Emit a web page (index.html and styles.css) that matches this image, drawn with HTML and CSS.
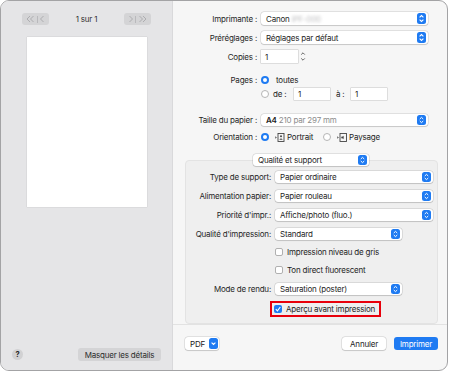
FILE: index.html
```html
<!DOCTYPE html>
<html lang="fr">
<head>
<meta charset="utf-8">
<link rel="stylesheet" href="styles.css">
</head>
<body>
<div class="win">
  <aside class="side">
    <div class="nav">
      <div class="navbtn">
        <svg width="9" height="8" viewBox="0 0 9 8"><path d="M4 1 L1 4 L4 7 M7.5 1 L4.5 4 L7.5 7" fill="none" stroke="#a8a8ab" stroke-width="0.9"/></svg>
        <span class="nsep"></span>
        <svg width="5" height="8" viewBox="0 0 5 8"><path d="M3.5 1 L0.5 4 L3.5 7" fill="none" stroke="#a8a8ab" stroke-width="0.9"/></svg>
      </div>
      <span class="pg">1 sur 1</span>
      <div class="navbtn">
        <svg width="5" height="8" viewBox="0 0 5 8"><path d="M1.5 1 L4.5 4 L1.5 7" fill="none" stroke="#a8a8ab" stroke-width="0.9"/></svg>
        <span class="nsep"></span>
        <svg width="9" height="8" viewBox="0 0 9 8"><path d="M1.5 1 L4.5 4 L1.5 7 M5 1 L8 4 L5 7" fill="none" stroke="#a8a8ab" stroke-width="0.9"/></svg>
      </div>
    </div>
    <div class="page"></div>
    <div class="side-foot">
      <span class="help">?</span>
      <span class="gbtn">Masquer les détails</span>
    </div>
  </aside>
  <main class="main">
    <div class="form">
      <div class="row r1">
        <span class="lbl">Imprimante :</span>
        <div class="pop w-full"><span class="txt">Canon <span class="blur">iPF-000</span></span><span class="arr"><svg width="9" height="11" viewBox="0 0 9 11"><path d="M2.6 4.4 L4.5 2.6 L6.4 4.4 M2.6 6.6 L4.5 8.4 L6.4 6.6" fill="none" stroke="#fff" stroke-width="1.1"/></svg></span></div>
      </div>
      <div class="row r2">
        <span class="lbl">Préréglages :</span>
        <div class="pop w-full"><span class="txt">Réglages par défaut</span><span class="arr"><svg width="9" height="11" viewBox="0 0 9 11"><path d="M2.6 4.4 L4.5 2.6 L6.4 4.4 M2.6 6.6 L4.5 8.4 L6.4 6.6" fill="none" stroke="#fff" stroke-width="1.1"/></svg></span></div>
      </div>
      <div class="row r3">
        <span class="lbl">Copies :</span>
        <span class="field copies">1</span>
        <span class="stepper"><svg width="8" height="13" viewBox="0 0 8 13"><path d="M2.2 4.6 L4 2.8 L5.8 4.6 M2.2 8.4 L4 10.2 L5.8 8.4" fill="none" stroke="#555" stroke-width="0.9"/></svg></span>
      </div>
      <div class="row r4">
        <span class="lbl">Pages :</span>
        <span class="radio on"></span><span class="rtxt">toutes</span>
      </div>
      <div class="row r5">
        <span class="lbl"></span>
        <span class="radio"></span><span class="rtxt de">de :</span>
        <span class="field small">1</span>
        <span class="a">à :</span>
        <span class="field small">1</span>
      </div>
      <div class="row r6">
        <span class="lbl">Taille du papier :</span>
        <div class="pop w-full h12"><span class="txt"><b class="a4">A4</b> <span class="dim">210 par 297 mm</span></span><span class="arr"><svg width="9" height="11" viewBox="0 0 9 11"><path d="M2.6 4.4 L4.5 2.6 L6.4 4.4 M2.6 6.6 L4.5 8.4 L6.4 6.6" fill="none" stroke="#fff" stroke-width="1.1"/></svg></span></div>
      </div>
      <div class="row r7">
        <span class="lbl">Orientation :</span>
        <span class="radio on"></span>
        <svg class="oicon" width="10" height="9" viewBox="0 0 10 9"><path d="M0.3 3.2 L1.8 4.5 L0.3 5.8 Z" fill="#444"/><rect x="3" y="0.5" width="6" height="8" fill="none" stroke="#444" stroke-width="0.9"/><circle cx="6" cy="3.2" r="1" fill="#444"/><path d="M4.3 6.8 Q6 4.4 7.7 6.8 Z" fill="#444"/></svg>
        <span class="otxt">Portrait</span>
        <span class="radio"></span>
        <svg class="oicon" width="10" height="9" viewBox="0 0 10 9"><path d="M0.3 3.2 L1.8 4.5 L0.3 5.8 Z" fill="#444"/><rect x="3" y="0.5" width="6.5" height="8" fill="none" stroke="#444" stroke-width="0.9"/><circle cx="5.2" cy="4.5" r="1" fill="#444"/><path d="M6.6 2.8 Q4.4 4.5 6.6 6.2 Z" fill="#444"/></svg>
        <span class="otxt">Paysage</span>
      </div>
      <div class="group">
        <div class="pop gpop"><span class="txt">Qualité et support</span><span class="arr"><svg width="9" height="11" viewBox="0 0 9 11"><path d="M2.6 4.4 L4.5 2.6 L6.4 4.4 M2.6 6.6 L4.5 8.4 L6.4 6.6" fill="none" stroke="#fff" stroke-width="1.1"/></svg></span></div>
        <div class="grow first">
          <span class="glbl">Type de support:</span>
          <div class="pop h12 wide"><span class="txt">Papier ordinaire</span><span class="arr"><svg width="9" height="11" viewBox="0 0 9 11"><path d="M2.6 4.4 L4.5 2.6 L6.4 4.4 M2.6 6.6 L4.5 8.4 L6.4 6.6" fill="none" stroke="#fff" stroke-width="1.1"/></svg></span></div>
        </div>
        <div class="grow">
          <span class="glbl">Alimentation papier:</span>
          <div class="pop h12 wide"><span class="txt">Papier rouleau</span><span class="arr"><svg width="9" height="11" viewBox="0 0 9 11"><path d="M2.6 4.4 L4.5 2.6 L6.4 4.4 M2.6 6.6 L4.5 8.4 L6.4 6.6" fill="none" stroke="#fff" stroke-width="1.1"/></svg></span></div>
        </div>
        <div class="grow">
          <span class="glbl">Priorité d'impr.:</span>
          <div class="pop h12 wide"><span class="txt">Affiche/photo (fluo.)</span><span class="arr"><svg width="9" height="11" viewBox="0 0 9 11"><path d="M2.6 4.4 L4.5 2.6 L6.4 4.4 M2.6 6.6 L4.5 8.4 L6.4 6.6" fill="none" stroke="#fff" stroke-width="1.1"/></svg></span></div>
        </div>
        <div class="grow">
          <span class="glbl">Qualité d'impression:</span>
          <div class="pop h12 mid"><span class="txt">Standard</span><span class="arr"><svg width="9" height="11" viewBox="0 0 9 11"><path d="M2.6 4.4 L4.5 2.6 L6.4 4.4 M2.6 6.6 L4.5 8.4 L6.4 6.6" fill="none" stroke="#fff" stroke-width="1.1"/></svg></span></div>
        </div>
        <div class="grow cbrow">
          <span class="glbl"></span>
          <span class="cb"></span><span class="cbtxt">Impression niveau de gris</span>
        </div>
        <div class="grow cbrow">
          <span class="glbl"></span>
          <span class="cb"></span><span class="cbtxt">Ton direct fluorescent</span>
        </div>
        <div class="grow">
          <span class="glbl">Mode de rendu:</span>
          <div class="pop h12 mid"><span class="txt">Saturation (poster)</span><span class="arr"><svg width="9" height="11" viewBox="0 0 9 11"><path d="M2.6 4.4 L4.5 2.6 L6.4 4.4 M2.6 6.6 L4.5 8.4 L6.4 6.6" fill="none" stroke="#fff" stroke-width="1.1"/></svg></span></div>
        </div>
        <div class="redbox">
          <span class="cb on"><svg width="8" height="8" viewBox="0 0 8 8"><path d="M1.8 4.2 L3.4 5.8 L6.3 2" fill="none" stroke="#fff" stroke-width="1.1"/></svg></span><span class="cbtxt">Aperçu avant impression</span>
        </div>
      </div>
    </div>
    <div class="foot">
      <span class="pdf">PDF<span class="arr"><svg width="9" height="11" viewBox="0 0 9 11"><path d="M2.6 4.6 L4.5 6.5 L6.4 4.6" fill="none" stroke="#fff" stroke-width="1.1"/></svg></span></span>
      <span class="spacer"></span>
      <span class="wbtn">Annuler</span>
      <span class="bbtn">Imprimer</span>
    </div>
  </main>
</div>
</body>
</html>
```

FILE: styles.css
```css
body {
  margin: 0;
  background: #ffffff;
  font-family: Inter, "Liberation Sans", sans-serif;
  font-size: 8px;
  letter-spacing: -0.2px;
  color: #242424;
}

.win {
  width: 448px;
  height: 371px;
  box-sizing: border-box;
  border: 1px solid #a3a3a5;
  border-radius: 9px;
  overflow: hidden;
  display: flex;
  background: #f6f6f6;
}

/* Sidebar */
.side {
  width: 171px;
  background: #e5e5e7;
  border-right: 1px solid #d9d9db;
  display: flex;
  flex-direction: column;
}

.nav {
  display: flex;
  align-items: center;
  justify-content: space-between;
  height: 12px;
  margin-top: 12px;
  padding: 0 21px;
}

.navbtn {
  width: 27px;
  height: 12px;
  background: #d4d4d6;
  border-radius: 3px;
  display: flex;
  align-items: center;
  justify-content: center;
  gap: 2px;
}

.nsep {
  width: 1px;
  height: 7px;
  background: #b9b9bc;
}

.pg {
  color: #333;
}

.page {
  align-self: center;
  width: 120px;
  height: 170px;
  margin-top: 12px;
  margin-left: 1px;
  background: #ffffff;
  box-shadow: 0 0 1px rgba(0, 0, 0, 0.25);
}

.side-foot {
  margin-top: auto;
  display: flex;
  align-items: center;
  justify-content: space-between;
  padding: 0 11px 9px 11px;
}

.help {
  width: 11px;
  height: 11px;
  border-radius: 50%;
  background: #d1d1d3;
  color: #2a2a2a;
  font-weight: 700;
  font-size: 7.5px;
  display: flex;
  align-items: center;
  justify-content: center;
}

.gbtn {
  width: 83px;
  height: 13px;
  background: #d4d4d6;
  border-radius: 3px;
  display: flex;
  align-items: center;
  justify-content: center;
  color: #2c2c2c;
}

/* Main */
.main {
  flex: 1;
  display: flex;
  flex-direction: column;
}

.form {
  flex: 1;
  padding-top: 11px;
}

.row {
  display: flex;
  align-items: center;
  height: 13px;
}

.r2, .r3 { margin-top: 6px; }
.r4 { margin-top: 11px; height: 12px; }
.r5 { margin-top: 2px; height: 12px; }
.r6 { margin-top: 14px; height: 12px; }
.r7 { margin-top: 5px; height: 12px; }

.lbl {
  width: 84px;
  margin-right: 4px;
  text-align: right;
  flex: none;
  color: #262626;
}

.pop {
  display: flex;
  align-items: center;
  height: 13px;
  box-sizing: border-box;
  background: #ffffff;
  border-radius: 3px;
  box-shadow: 0 0 0 0.5px rgba(0, 0, 0, 0.16), 0 0.5px 1px rgba(0, 0, 0, 0.12);
  padding-left: 5px;
  flex: none;
}

.pop .txt {
  flex: 1;
  white-space: nowrap;
  color: #1f1f1f;
}

.arr {
  width: 9px;
  height: 11px;
  background: #1f7bf2;
  border-radius: 2.5px;
  margin-right: 2px;
  display: flex;
}

.h12 { height: 12px; }
.h12 .arr { height: 10px; }
.h12 .arr svg { height: 10px; }

.w-full { width: 167px; }

.blur {
  color: #bdbdbf;
  filter: blur(1.4px);
}

.a4 {
  font-weight: 600;
  color: #222;
}

.dim {
  color: #8c8c8c;
}

.field {
  height: 13px;
  box-sizing: border-box;
  background: #ffffff;
  box-shadow: 0 0 0 0.5px rgba(0, 0, 0, 0.2);
  padding-left: 4px;
  display: flex;
  align-items: center;
}

.copies { width: 37px; }

.stepper {
  margin-left: 1px;
  width: 8px;
  height: 13px;
  display: flex;
}

.small {
  width: 36px;
  height: 12px;
}

.radio {
  width: 8px;
  height: 8px;
  box-sizing: border-box;
  border-radius: 50%;
  background: #ffffff;
  border: 0.5px solid #b5b5b5;
  flex: none;
}

.radio.on {
  border: 2.5px solid #1f7bf2;
}

.rtxt {
  margin-left: 7px;
}

.rtxt.de {
  margin-left: 4px;
  width: 21px;
}

.a {
  margin-left: 6px;
  width: 15px;
}

.oicon {
  margin-left: 6px;
  flex: none;
}

.otxt {
  margin-left: 2px;
  margin-right: 10px;
}

/* Group */
.group {
  margin: 17px 9px 0 12px;
  box-sizing: border-box;
  border: 1px solid #e3e3e3;
  border-radius: 4px;
  background: #efefef;
  padding-bottom: 6px;
  display: flex;
  flex-direction: column;
}

.gpop {
  width: 116px;
  height: 12px;
  margin-top: -7px;
  align-self: center;
  margin-left: -1px;
}

.gpop .arr { height: 10px; }
.gpop .arr svg { height: 10px; }

.grow {
  display: flex;
  align-items: center;
  height: 12px;
  margin-top: 7px;
}

.grow.first { margin-top: 5px; }
.grow.cbrow { margin-top: 6px; }

.glbl {
  width: 85px;
  margin-right: 4px;
  text-align: right;
  flex: none;
  color: #262626;
}

.wide { width: 158px; }
.mid { width: 127px; }

.cb {
  width: 8px;
  height: 8px;
  box-sizing: border-box;
  border-radius: 2px;
  background: #ffffff;
  border: 0.5px solid #b0b0b0;
  flex: none;
  display: flex;
}

.cb.on {
  background: #1f7bf2;
  border: none;
}

.cbtxt {
  margin-left: 4px;
  white-space: nowrap;
}

.redbox {
  margin-top: 6px;
  margin-left: 84px;
  width: 111px;
  height: 16px;
  box-sizing: border-box;
  border: 2px solid #e8000b;
  display: flex;
  align-items: center;
  padding-left: 2px;
}

/* Footer */
.foot {
  height: 35px;
  border-top: 1px solid #e2e2e2;
  display: flex;
  align-items: flex-start;
  padding: 12px 9px 0 12px;
  box-sizing: content-box;
}

.pdf {
  width: 34px;
  height: 13px;
  box-sizing: border-box;
  background: #ffffff;
  border-radius: 3px;
  box-shadow: 0 0 0 0.5px rgba(0, 0, 0, 0.16), 0 0.5px 1px rgba(0, 0, 0, 0.12);
  display: flex;
  align-items: center;
  justify-content: space-between;
  padding-left: 5px;
  color: #222;
}

.pdf .arr {
  margin-right: 1px;
}

.spacer { flex: 1; }

.wbtn, .bbtn {
  width: 44px;
  height: 13px;
  border-radius: 3px;
  display: flex;
  align-items: center;
  justify-content: center;
}

.wbtn {
  background: #ffffff;
  box-shadow: 0 0 0 0.5px rgba(0, 0, 0, 0.16), 0 0.5px 1px rgba(0, 0, 0, 0.12);
  color: #222;
}

.bbtn {
  margin-left: 8px;
  background: #1f7bf2;
  color: #ffffff;
}
```
